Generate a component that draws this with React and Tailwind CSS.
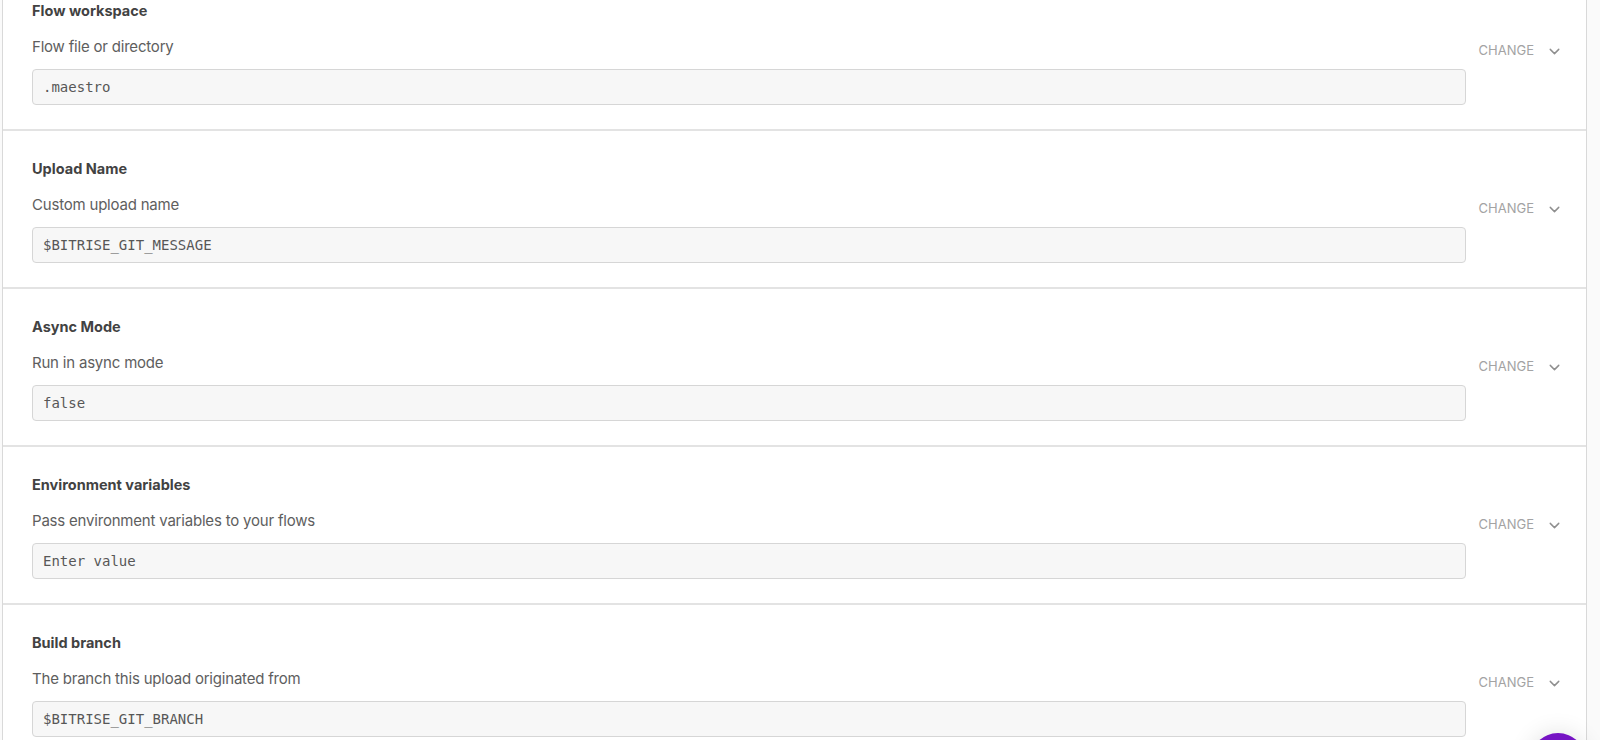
import { ChevronDown } from 'lucide-react';

// ─── Data ─────────────────────────────────────────────────────────────────────

const fields = [
    { title: 'Flow workspace', label: 'Flow file or directory', value: '.maestro' },
    { title: 'Upload Name', label: 'Custom upload name', value: '$BITRISE_GIT_MESSAGE' },
    { title: 'Async Mode', label: 'Run in async mode', value: 'false' },
    { title: 'Environment variables', label: 'Pass environment variables to your flows', value: 'Enter value' },
    { title: 'Build branch', label: 'The branch this upload originated from', value: '$BITRISE_GIT_BRANCH' },
];

// ─── Row ──────────────────────────────────────────────────────────────────────

const InputRow = ({ title, label, value, first }) => (
    <div className={`flex items-center ${first ? '' : 'border-t-2 border-[#e3e3e3]'}`}>
        <div className="flex-1 min-w-0 pl-[29px] pt-[28px] pb-[24px]">
            <p className="text-[14.5px] leading-[20px] font-bold text-[#424242]">{title}</p>
            <p className="mt-[15px] text-[15px] leading-[22px] tracking-[-0.2px] text-[#5e5e5e]">{label}</p>
            <div className="mt-[11px] h-[36px] flex items-center px-[10px] bg-[#f7f7f7] border border-[#d6d6d6] rounded-[4px]">
                <span className="font-['DejaVu_Sans_Mono',monospace] text-[14px] text-[#575757]">{value}</span>
            </div>
        </div>
        <button className="flex items-center gap-[12px] pl-[13px] pr-[23px] text-[13px] text-[#a3a3a3] uppercase">
            Change
            <ChevronDown size={17} strokeWidth={2} className="text-[#8f8f8f]" />
        </button>
    </div>
);

// ─── App ──────────────────────────────────────────────────────────────────────

const App = () => {
    return (
        <div className="relative h-[740px] overflow-hidden bg-[#fafafa] font-['Inter',sans-serif]">
            <div className="ml-[2px] w-[1585px] -mt-[27px] bg-white border-l border-r border-[#d9d9d9]">
                {fields.map((f, i) => (
                    <InputRow key={f.title} {...f} first={i === 0} />
                ))}
            </div>

            {/* Chat bubble */}
            <div className="absolute right-[14px] bottom-[-49px] w-[56px] h-[56px] rounded-full bg-[#7614c4] shadow-[0_0_24px_rgba(0,0,0,0.12)]" />
        </div>
    );
};

export default App;
